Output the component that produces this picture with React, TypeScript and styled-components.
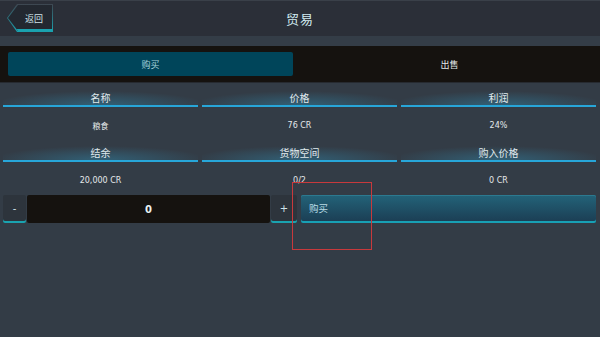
import React, { useState } from 'react';
import styled, { createGlobalStyle } from 'styled-components';

const GlobalStyle = createGlobalStyle`
  html, body {
    margin: 0;
    padding: 0;
    background: #333c46;
  }
  * { box-sizing: border-box; }
`;

const FONT = `"DejaVu Sans", "Noto Sans CJK SC", sans-serif`;

const Page = styled.div`
  position: relative;
  width: 600px;
  height: 337px;
  overflow: hidden;
  background: #333c46;
  font-family: ${FONT};
  color: #dfe8ec;
`;

const Header = styled.div`
  height: 36px;
  background: #2b2f38;
  border-top: 1px solid #3a4049;
  display: flex;
  align-items: center;
  position: relative;
`;

const BackButton = styled.button`
  position: absolute;
  left: 8px;
  top: 4px;
  width: 44px;
  height: 26px;
  border: none;
  padding: 0 0 0 8px;
  background: #232830;
  color: #cfe3ea;
  font-family: ${FONT};
  font-size: 9px;
  clip-path: polygon(10px 0, 100% 0, 100% 100%, 10px 100%, 0 50%);
  box-shadow: inset 0 -2px 0 #1aa3b0;
  cursor: pointer;
`;

const BackEdge = styled.div`
  position: absolute;
  left: 7px;
  top: 3px;
  width: 46px;
  height: 28px;
  background: linear-gradient(#3e4650, #1aa3b0);
  clip-path: polygon(10px 0, 100% 0, 100% 100%, 10px 100%, 0 50%);
`;

const Title = styled.div`
  flex: 1;
  text-align: center;
  font-size: 13px;
  color: #d3ecf2;
  letter-spacing: 1px;
`;

const Band = styled.div`
  height: 10px;
  background: #343d47;
`;

const Tabs = styled.div`
  height: 37px;
  background: #15120f;
  display: flex;
  align-items: center;
  gap: 10px;
  padding: 0 4px 0 8px;
  border-bottom: 1px solid #262a30;
`;

const Tab = styled.div<{ $active?: boolean }>`
  flex: ${(p) => (p.$active ? '0 0 285px' : '1')};
  height: 24px;
  display: flex;
  align-items: center;
  justify-content: center;
  font-size: 9px;
  border-radius: 2px;
  background: ${(p) => (p.$active ? '#00455a' : 'transparent')};
  color: ${(p) => (p.$active ? '#a8d3dc' : '#e4e8ea')};
`;

const Grid = styled.div<{ $top: number }>`
  display: grid;
  grid-template-columns: repeat(3, 195px);
  column-gap: 4px;
  padding: ${(p) => p.$top}px 0 0 3px;
`;

const Label = styled.div`
  height: 16px;
  text-align: center;
  font-size: 10px;
  line-height: 15px;
  color: #e1eaee;
  border-bottom: 2px solid #27a6d9;
  background: radial-gradient(ellipse 55% 100% at 50% 100%, rgba(46, 150, 190, 0.4), rgba(46, 150, 190, 0) 100%);
`;

const Value = styled.div`
  height: 39px;
  display: flex;
  align-items: center;
  justify-content: center;
  font-size: 8px;
  color: #e4e8ea;
  padding-bottom: 3px;
`;

const Controls = styled.div`
  display: flex;
  align-items: stretch;
  height: 28px;
  margin-top: -6px;
  padding: 0 4px 0 3px;
  gap: 1px;
`;

const StepButton = styled.button<{ $w: number }>`
  width: ${(p) => p.$w}px;
  border: none;
  border-radius: 2px;
  background: #2d343c;
  box-shadow: inset 0 -2px 0 #1aa3b0;
  color: #cfe3ea;
  font-family: ${FONT};
  font-size: 10px;
  padding: 0 0 2px;
  cursor: pointer;
`;

const Amount = styled.div`
  width: 243px;
  background: #15120f;
  border-radius: 2px;
  display: flex;
  align-items: center;
  justify-content: center;
  font-size: 10px;
  font-weight: bold;
  color: #e8f0f2;
`;

const BuyButton = styled.button`
  flex: 1;
  margin-left: 3px;
  border: none;
  border-radius: 2px;
  background: linear-gradient(#236379, #1b3c52);
  box-shadow: inset 0 -2px 0 #18a0b4, inset 0 1px 0 #2c7a90;
  color: #b9dce6;
  font-family: ${FONT};
  font-size: 9.5px;
  text-align: left;
  padding: 0 0 2px 8px;
  cursor: pointer;
`;

const Highlight = styled.div`
  position: absolute;
  left: 292px;
  top: 182px;
  width: 80px;
  height: 68px;
  border: 1px solid #c8393c;
  pointer-events: none;
`;

const rows = [
  [
    { label: '名称', value: '粮食' },
    { label: '价格', value: '76 CR' },
    { label: '利润', value: '24%' },
  ],
  [
    { label: '结余', value: '20,000 CR' },
    { label: '货物空间', value: '0/2' },
    { label: '购入价格', value: '0 CR' },
  ],
];

const App: React.FC = () => {
  const [mode, setMode] = useState<'buy' | 'sell'>('buy');
  const [count, setCount] = useState(0);

  return (
    <Page>
      <GlobalStyle />
      <Header>
        <BackEdge />
        <BackButton>返回</BackButton>
        <Title>贸易</Title>
      </Header>
      <Band />
      <Tabs>
        <Tab $active={mode === 'buy'} onClick={() => setMode('buy')}>购买</Tab>
        <Tab $active={mode === 'sell'} onClick={() => setMode('sell')}>出售</Tab>
      </Tabs>
      {rows.map((row, i) => (
        <Grid key={i} $top={i === 0 ? 8 : 0}>
          {row.map((c) => (
            <Label key={c.label}>{c.label}</Label>
          ))}
          {row.map((c) => (
            <Value key={c.label}>{c.value}</Value>
          ))}
        </Grid>
      ))}
      <Controls>
        <StepButton $w={23} onClick={() => setCount(Math.max(0, count - 1))}>-</StepButton>
        <Amount>{count}</Amount>
        <StepButton $w={26} onClick={() => setCount(count + 1)}>+</StepButton>
        <BuyButton>购买</BuyButton>
      </Controls>
      <Highlight />
    </Page>
  );
};

export default App;
